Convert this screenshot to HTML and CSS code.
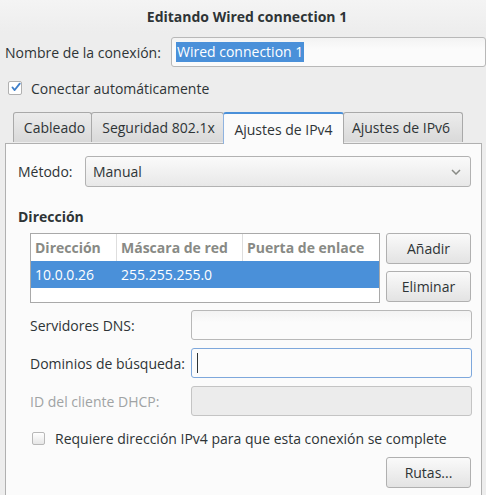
FILE: index.html
```html
<!DOCTYPE html>
<html lang="es">
<head>
<meta charset="utf-8">
<title>Editando Wired connection 1</title>
<link rel="stylesheet" href="styles.css">
</head>
<body>
<div class="window">
  <div class="header">Editando Wired connection 1</div>

  <div class="name-row">
    <span class="label">Nombre de la conexión:</span>
    <div class="entry name-entry"><span class="selected">Wired connection 1</span></div>
  </div>

  <div class="check-row auto-row">
    <span class="check checked">
      <svg width="13" height="13" viewBox="0 0 13 13"><path d="M3 6.5 L5.5 9.5 L11.5 2" fill="none" stroke="#3f7fc9" stroke-width="2.2" stroke-linecap="round" stroke-linejoin="round"/></svg>
    </span>
    <span>Conectar automáticamente</span>
  </div>

  <div class="tabs">
    <div class="tab t1">Cableado</div>
    <div class="tab t2">Seguridad 802.1x</div>
    <div class="tab t3 active">Ajustes de IPv4</div>
    <div class="tab t4">Ajustes de IPv6</div>
  </div>

  <div class="panel">
    <div class="method-row">
      <span class="method-label">Método:</span>
      <div class="combo">
        <span>Manual</span>
        <svg width="10" height="6" viewBox="0 0 10 6"><path d="M1 1 L5 5 L9 1" fill="none" stroke="#888a85" stroke-width="1.5"/></svg>
      </div>
    </div>

    <div class="section-title">Dirección</div>

    <div class="address">
      <div class="table">
        <div class="thead">
          <div class="th c1">Dirección</div>
          <div class="th c2">Máscara de red</div>
          <div class="th c3">Puerta de enlace</div>
        </div>
        <div class="trow sel">
          <div class="td c1">10.0.0.26</div>
          <div class="td c2">255.255.255.0</div>
          <div class="td c3"></div>
        </div>
      </div>
      <div class="side-buttons">
        <div class="button">Añadir</div>
        <div class="button">Eliminar</div>
      </div>
    </div>

    <div class="form">
      <span class="flabel">Servidores DNS:</span>
      <div class="entry"></div>
      <span class="flabel">Dominios de búsqueda:</span>
      <div class="entry focus"><span class="cursor"></span></div>
      <span class="flabel disabled">ID del cliente DHCP:</span>
      <div class="entry off"></div>
    </div>

    <div class="check-row req-row">
      <span class="check"></span>
      <span>Requiere dirección IPv4 para que esta conexión se complete</span>
    </div>

    <div class="bottom">
      <div class="button">Rutas...</div>
    </div>
  </div>
</div>
</body>
</html>
```

FILE: styles.css
```css
* { box-sizing: border-box; }
html, body { margin: 0; padding: 0; }
body {
  background: #ededed;
  font-family: "Open Sans", "DejaVu Sans", sans-serif;
  font-size: 14px;
  color: #2e3436;
  width: 486px;
  height: 495px;
  overflow: hidden;
}
.window { display: flex; flex-direction: column; }

.header {
  height: 33px;
  display: flex;
  align-items: center;
  justify-content: center;
  font-weight: bold;
  padding-left: 8px;
  background: linear-gradient(#f4f4f4, #ededed);
}

.name-row {
  display: flex;
  align-items: center;
  margin-top: 4px;
  padding-left: 5px;
}
.name-row .label { width: 166px; }
.entry {
  height: 30px;
  border: 1px solid #b8b8b8;
  border-radius: 3px;
  background: linear-gradient(#f3f3f3, #fbfbfb 40%);
  display: flex;
  align-items: center;
  padding-left: 4px;
}
.name-entry { width: 315px; }
.selected {
  background: #4a90d9;
  color: #fff;
  line-height: 20px;
  padding: 0 1px;
}

.check-row { display: flex; align-items: center; }
.auto-row { margin-top: 9px; height: 24px; padding-left: 8px; gap: 9px; }
.check {
  width: 14px;
  height: 14px;
  border: 1px solid #b0b0b0;
  border-radius: 2px;
  background: linear-gradient(#ffffff, #e6e6e6);
  display: flex;
  align-items: center;
  justify-content: center;
}
.check.checked { background: #fff; }
.check svg { display: block; margin-top: -2px; margin-left: 1px; }

.tabs {
  display: flex;
  align-items: flex-end;
  margin-top: 12px;
  padding-left: 13px;
  height: 31px;
  position: relative;
  z-index: 1;
}
.tab {
  height: 30px;
  display: flex;
  align-items: center;
  justify-content: center;
  border: 1px solid #a9a9a9;
  border-bottom: none;
  border-radius: 3px 3px 0 0;
  background: linear-gradient(#ececec, #d9d9d9);
  margin-right: -1px;
  margin-bottom: 1px;
  white-space: nowrap;
}
.t1 { width: 79px; padding-left: 4px; }
.t2 { width: 133px; padding-left: 2px; }
.t3 { width: 121px; }
.t4 { width: 120px; padding-right: 4px; }
.tab.active {
  height: 32px;
  margin-bottom: -1px;
  background: #fbfbfb;
  border-top: 2px solid #4a90d9;
  border-left-color: #8fb3e0;
  border-right-color: #b0b0b0;
}

.panel {
  margin-left: 5px;
  width: 477px;
  border: 1px solid #b0b0b0;
  border-bottom: none;
  background: #fbfbfb;
  padding: 12px 10px 0 12px;
  height: 360px;
}
.method-row { display: flex; align-items: center; }
.method-label { width: 67px; }
.combo {
  flex: 1;
  height: 31px;
  border: 1px solid #b2b2b2;
  border-radius: 3px;
  background: linear-gradient(#fafafa, #e8e8e8);
  display: flex;
  align-items: center;
  justify-content: space-between;
  padding: 0 9px 0 7px;
}

.section-title {
  font-weight: bold;
  margin-top: 21px;
  line-height: 18px;
}

.address {
  display: flex;
  gap: 6px;
  margin-top: 7px;
  padding-left: 12px;
}
.table {
  width: 351px;
  height: 70px;
  border: 1px solid #a9a9a9;
  background: #fff;
}
.thead, .trow { display: flex; }
.thead { height: 27px; }
.th {
  color: #888a85;
  font-weight: bold;
  display: flex;
  align-items: center;
  padding-left: 4px;
  border-right: 1px solid #dedede;
  white-space: nowrap;
}
.th.c3 { border-right: none; }
.c1 { width: 86px; }
.c2 { width: 126px; }
.c3 { flex: 1; }
.trow { height: 27px; }
.trow.sel { background: #4a90d9; color: #fff; }
.td { display: flex; align-items: center; padding-left: 4px; }
.side-buttons { display: flex; flex-direction: column; gap: 7px; }
.button {
  width: 85px;
  height: 31px;
  border: 1px solid #b0b0b0;
  border-radius: 3px;
  background: linear-gradient(#fafafa, #e3e3e3);
  display: flex;
  align-items: center;
  justify-content: center;
}

.form {
  display: grid;
  grid-template-columns: 161px 281px;
  row-gap: 8px;
  margin-top: 7px;
  padding-left: 12px;
  align-items: center;
}
.form .entry { height: 30px; }
.entry.focus { border-color: #7ea8dc; background: #fcfcfc; }
.entry.off { background: #ececec; border-color: #c4c4c4; }
.cursor { width: 1px; height: 20px; background: #2e3436; margin-left: 1px; }
.flabel.disabled { color: #a0a3a4; }

.req-row { margin-top: 15px; padding-left: 14px; gap: 10px; height: 14px; }
.req-row .check { width: 13px; height: 13px; border-color: #b8b8b8; }

.bottom { display: flex; justify-content: flex-end; margin-top: 12px; }
```
